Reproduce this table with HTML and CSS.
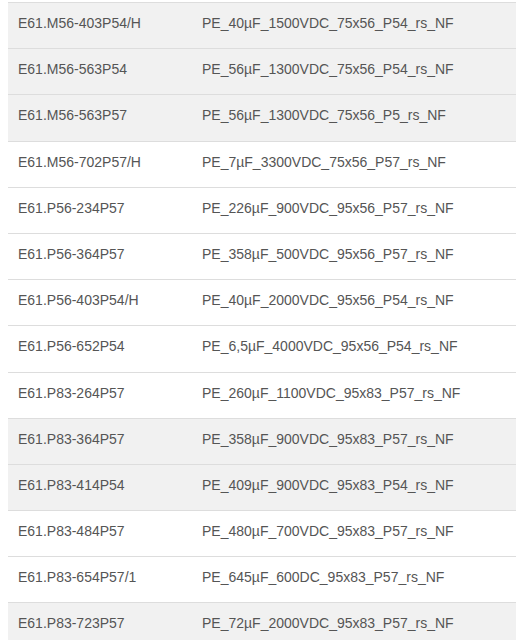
FILE: index.html
```html
<!DOCTYPE html>
<html lang="en">
<head>
    <meta charset="UTF-8">
    <title>Capacitor list</title>
    <link rel="stylesheet" href="styles.css">
</head>
<body>
    <div class="wrap">
        <table class="parts">
            <tbody>
                <tr class="shaded"><td>E61.M56-403P54/H</td><td>PE_40µF_1500VDC_75x56_P54_rs_NF</td></tr>
                <tr class="shaded"><td>E61.M56-563P54</td><td>PE_56µF_1300VDC_75x56_P54_rs_NF</td></tr>
                <tr class="shaded"><td>E61.M56-563P57</td><td>PE_56µF_1300VDC_75x56_P5_rs_NF</td></tr>
                <tr><td>E61.M56-702P57/H</td><td>PE_7µF_3300VDC_75x56_P57_rs_NF</td></tr>
                <tr><td>E61.P56-234P57</td><td>PE_226µF_900VDC_95x56_P57_rs_NF</td></tr>
                <tr><td>E61.P56-364P57</td><td>PE_358µF_500VDC_95x56_P57_rs_NF</td></tr>
                <tr><td>E61.P56-403P54/H</td><td>PE_40µF_2000VDC_95x56_P54_rs_NF</td></tr>
                <tr><td>E61.P56-652P54</td><td>PE_6,5µF_4000VDC_95x56_P54_rs_NF</td></tr>
                <tr><td>E61.P83-264P57</td><td>PE_260µF_1100VDC_95x83_P57_rs_NF</td></tr>
                <tr class="shaded"><td>E61.P83-364P57</td><td>PE_358µF_900VDC_95x83_P57_rs_NF</td></tr>
                <tr class="shaded"><td>E61.P83-414P54</td><td>PE_409µF_900VDC_95x83_P54_rs_NF</td></tr>
                <tr><td>E61.P83-484P57</td><td>PE_480µF_700VDC_95x83_P57_rs_NF</td></tr>
                <tr><td>E61.P83-654P57/1</td><td>PE_645µF_600DC_95x83_P57_rs_NF</td></tr>
                <tr class="shaded"><td>E61.P83-723P57</td><td>PE_72µF_2000VDC_95x83_P57_rs_NF</td></tr>
            </tbody>
        </table>
    </div>
</body>
</html>
```

FILE: styles.css
```css
/* Part number table */
body {
    margin: 0;
    font-family: "Liberation Sans", Arial, sans-serif;
    font-size: 14px;
    color: #555;
    background: #fff;
}
.wrap {
    padding: 2px 0 0 8px;
}
.parts {
    width: 508px;
    border-collapse: collapse;
    table-layout: fixed;
}
.parts td {
    border-top: 1px solid #ddd;
    padding: 10px 10px 15.2px;
    line-height: 20px;
    vertical-align: top;
    white-space: nowrap;
}
.parts td:first-child {
    width: 164px;
}
.parts tr.shaded td {
    background-color: #f1f1f1;
}
```
